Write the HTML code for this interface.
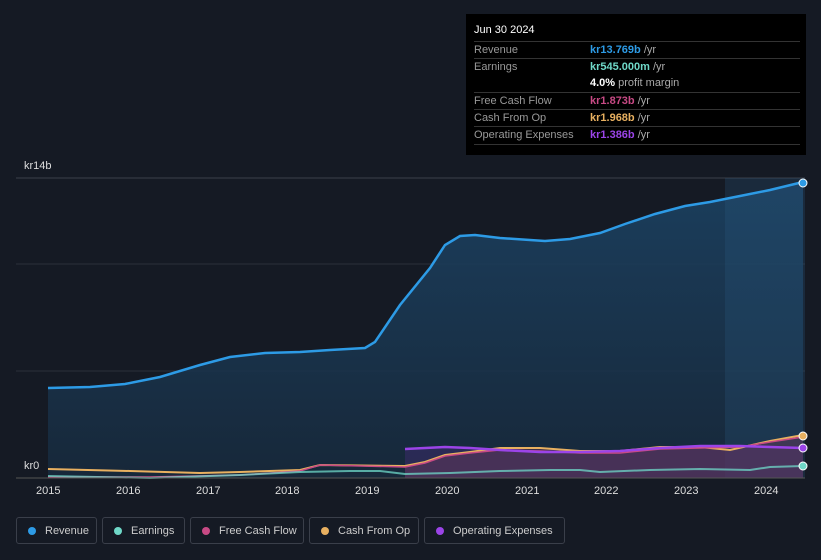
<!DOCTYPE html>
<html><head><style>
body{margin:0;width:821px;height:560px;background:#151a24;font-family:"Liberation Sans",sans-serif;position:relative;overflow:hidden}
.tip{position:absolute;left:466px;top:14px;width:340px;height:141px;background:#000;color:#999;font-size:11px}
.tip .h{position:absolute;left:8px;top:10px;color:#fff;font-size:11px}
.row{position:absolute;left:8px;width:326px;border-top:1px solid #333;height:17px;line-height:17px}
.row b{position:absolute;left:116px;font-weight:bold}
.row span{color:#aaa;font-weight:normal}
.leg{position:absolute;top:517px;height:27px;border:1px solid #3a3f4a;border-radius:3px;color:#ccc;font-size:11px;line-height:27px;box-sizing:border-box;padding-left:28px}
.leg i{position:absolute;left:11px;top:9px;width:8px;height:8px;border-radius:50%}
.ax{position:absolute;color:#ddd;font-size:11px}
</style></head><body>
<svg width="821" height="560" style="position:absolute;left:0;top:0">
<defs><linearGradient id="g" x1="0" y1="0" x2="0" y2="1"><stop offset="0" stop-color="#1c4466"/><stop offset="1" stop-color="#172a3d"/></linearGradient></defs>
<line x1="16" y1="178" x2="805" y2="178" stroke="#3a404a"/>
<line x1="16" y1="264" x2="805" y2="264" stroke="#2a303a"/>
<line x1="16" y1="371" x2="805" y2="371" stroke="#2a303a"/>
<path d="M48,388 L90,387 125,384 160,377 200,365 230,357 265,353 300,352 330,350 365,348 375,342 400,305 430,268 445,245 460,236 475,235 500,238 530,240 545,241 570,239 600,233 625,224 655,214 685,206 710,202 740,196 770,190 803,182 L803,478 L48,478Z" fill="url(#g)" opacity="0.85"/>
<rect x="725" y="178" width="80" height="300" fill="#2a5d84" opacity="0.25"/>
<path d="M48,388 L90,387 125,384 160,377 200,365 230,357 265,353 300,352 330,350 365,348 375,342 400,305 430,268 445,245 460,236 475,235 500,238 530,240 545,241 570,239 600,233 625,224 655,214 685,206 710,202 740,196 770,190 803,182" fill="none" stroke="#2d9be6" stroke-width="2.5"/>
<path d="M405,449 L445,447 470,448 500,450 540,452 580,452 620,451 660,448 700,446 740,446 770,447 803,448 L803,478 L405,478Z" fill="#3a2c6a" opacity="0.55"/>
<path d="M405,467 L425,462 445,455 470,452 500,448 540,448 580,451 620,451 660,447 700,447 730,450 770,441 803,436 L803,478 L405,478Z" fill="#6a3a5a" opacity="0.45"/>
<path d="M48,469 L130,471 200,473 240,472 300,470 320,465 405,466 425,462 445,455 470,452 500,448 540,448 580,451 620,451 660,447 700,447 730,450 770,441 803,435" fill="none" stroke="#e8b060" stroke-width="2"/>
<path d="M48,477 L150,477 240,475 300,471 320,465 405,467 425,463 445,456 470,453 500,450 540,451 580,453 620,453 660,449 700,448 740,447 770,442 803,437" fill="none" stroke="#c84a85" stroke-width="1.5"/>
<path d="M48,476 L150,478 240,475 300,472 350,471 380,471 405,474 450,473 500,471 550,470 580,470 600,472 650,470 700,469 750,470 770,467 803,466" fill="none" stroke="#6fd8c8" stroke-width="2" opacity="0.75"/>
<path d="M405,449 L445,447 470,448 500,450 540,452 580,452 620,451 660,448 700,446 740,446 770,447 803,448" fill="none" stroke="#9b44e8" stroke-width="2.5"/>
<line x1="16" y1="478" x2="805" y2="478" stroke="#555"/>
<circle cx="803" cy="183" r="4" fill="#2d9be6" stroke="#fff" stroke-width="1"/>
<circle cx="803" cy="436" r="4" fill="#e8b060" stroke="#fff" stroke-width="1"/>
<circle cx="803" cy="448" r="4" fill="#9b44e8" stroke="#fff" stroke-width="1"/>
<circle cx="803" cy="466" r="4" fill="#6fd8c8" stroke="#fff" stroke-width="1"/>
</svg>
<div class="ax" style="left:24px;top:160px">kr14b</div>
<div class="ax" style="left:24px;top:460px">kr0</div>
<div class="ax" style="left:36px;top:485px">2015</div><div class="ax" style="left:116px;top:485px">2016</div><div class="ax" style="left:196px;top:485px">2017</div><div class="ax" style="left:275px;top:485px">2018</div><div class="ax" style="left:355px;top:485px">2019</div><div class="ax" style="left:435px;top:485px">2020</div><div class="ax" style="left:515px;top:485px">2021</div><div class="ax" style="left:594px;top:485px">2022</div><div class="ax" style="left:674px;top:485px">2023</div><div class="ax" style="left:754px;top:485px">2024</div>
<div class="tip"><div class="h">Jun 30 2024</div>
<div class="row" style="top:27px">Revenue<b style="color:#2d9be6">kr13.769b <span>/yr</span></b></div>
<div class="row" style="top:44px">Earnings<b style="color:#6fd8c8">kr545.000m <span>/yr</span></b></div>
<div class="row" style="top:61px;border-top:none"><b style="color:#fff">4.0% <span>profit margin</span></b></div>
<div class="row" style="top:78px">Free Cash Flow<b style="color:#c84a85">kr1.873b <span>/yr</span></b></div>
<div class="row" style="top:95px">Cash From Op<b style="color:#e8b060">kr1.968b <span>/yr</span></b></div>
<div class="row" style="top:112px;border-bottom:1px solid #333">Operating Expenses<b style="color:#9b44e8">kr1.386b <span>/yr</span></b></div>
</div>
<div class="leg" style="left:16px;width:81px"><i style="background:#2d9be6"></i>Revenue</div>
<div class="leg" style="left:102px;width:83px"><i style="background:#6fd8c8"></i>Earnings</div>
<div class="leg" style="left:190px;width:114px"><i style="background:#c84a85"></i>Free Cash Flow</div>
<div class="leg" style="left:309px;width:110px"><i style="background:#e8b060"></i>Cash From Op</div>
<div class="leg" style="left:424px;width:141px"><i style="background:#9b44e8"></i>Operating Expenses</div>
</body></html>
